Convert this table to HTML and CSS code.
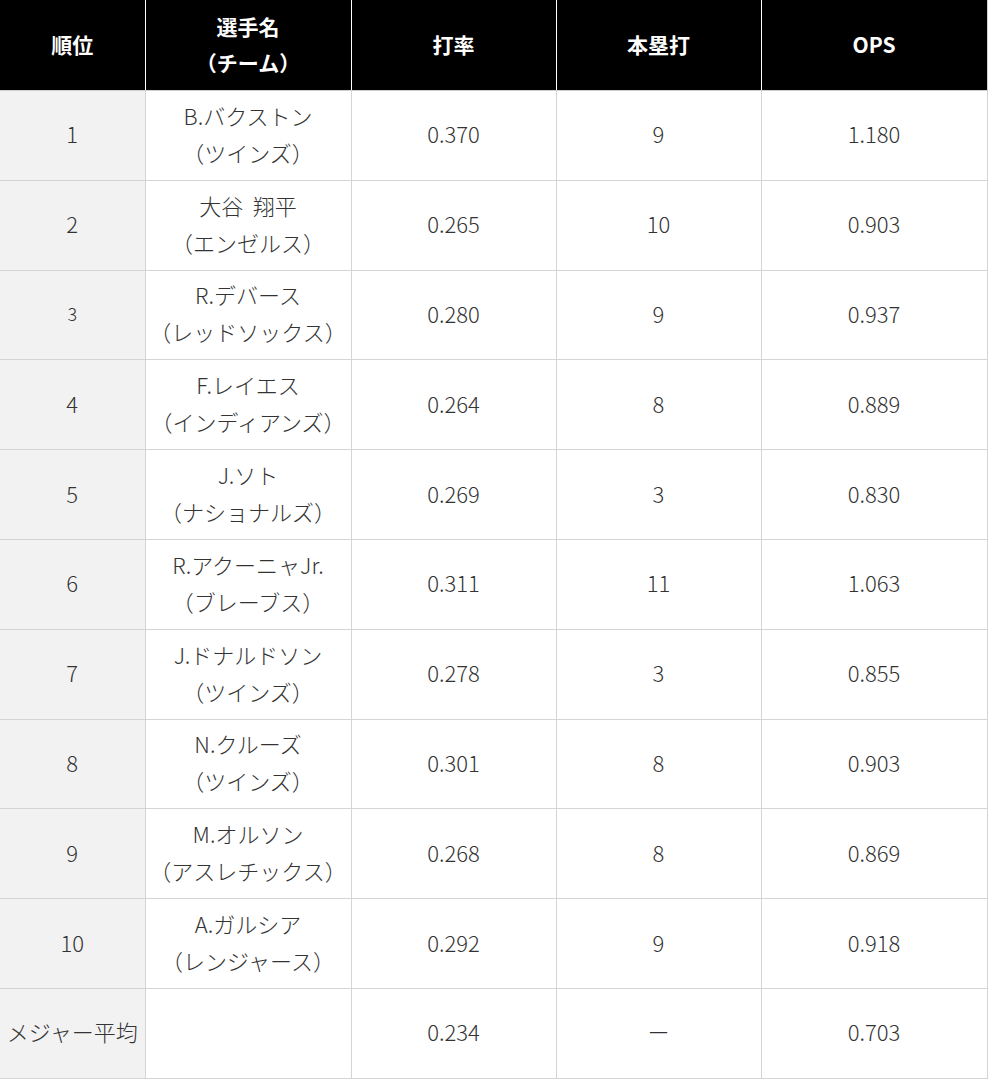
FILE: index.html
```html
<!DOCTYPE html>
<html lang="ja">
<head>
<meta charset="utf-8">
<title>ランキング</title>
<link rel="stylesheet" href="styles.css">
</head>
<body>
<table class="rank">
  <colgroup>
    <col class="c1"><col class="c2"><col class="c3"><col class="c4"><col class="c5">
  </colgroup>
  <thead>
    <tr>
      <th>順位</th>
      <th>選手名<br>（チーム）</th>
      <th>打率</th>
      <th>本塁打</th>
      <th>OPS</th>
    </tr>
  </thead>
  <tbody>
    <tr><td class="pos">1</td><td>B.バクストン<br>（ツインズ）</td><td>0.370</td><td>9</td><td>1.180</td></tr>
    <tr><td class="pos">2</td><td>大谷&nbsp;&nbsp;翔平<br>（エンゼルス）</td><td>0.265</td><td>10</td><td>0.903</td></tr>
    <tr><td class="pos small">3</td><td>R.デバース<br>（レッドソックス）</td><td>0.280</td><td>9</td><td>0.937</td></tr>
    <tr><td class="pos">4</td><td>F.レイエス<br>（インディアンズ）</td><td>0.264</td><td>8</td><td>0.889</td></tr>
    <tr><td class="pos">5</td><td>J.ソト<br>（ナショナルズ）</td><td>0.269</td><td>3</td><td>0.830</td></tr>
    <tr><td class="pos">6</td><td>R.アクーニャJr.<br>（ブレーブス）</td><td>0.311</td><td>11</td><td>1.063</td></tr>
    <tr><td class="pos">7</td><td>J.ドナルドソン<br>（ツインズ）</td><td>0.278</td><td>3</td><td>0.855</td></tr>
    <tr><td class="pos">8</td><td>N.クルーズ<br>（ツインズ）</td><td>0.301</td><td>8</td><td>0.903</td></tr>
    <tr><td class="pos">9</td><td>M.オルソン<br>（アスレチックス）</td><td>0.268</td><td>8</td><td>0.869</td></tr>
    <tr><td class="pos">10</td><td>A.ガルシア<br>（レンジャース）</td><td>0.292</td><td>9</td><td>0.918</td></tr>
    <tr><td class="pos avg">メジャー平均</td><td></td><td>0.234</td><td>ー</td><td>0.703</td></tr>
  </tbody>
</table>
</body>
</html>
```
FILE: styles.css
```css
html, body {
  margin: 0;
  padding: 0;
  background: #ffffff;
}

.rank {
  border-collapse: collapse;
  table-layout: fixed;
  width: 987px;
  font-family: "Noto Sans CJK JP", "Noto Sans", sans-serif;
  font-size: 22px;
  font-weight: 300;
  color: #333333;
}

.c1 { width: 145px; }
.c2 { width: 206px; }
.c3 { width: 205px; }
.c4 { width: 205px; }
.c5 { width: 226px; }

.rank th {
  background: #000000;
  color: #ffffff;
  font-weight: 700;
  font-size: 21px;
  height: 88px;
  line-height: 36px;
  padding: 0 0 2px;
  text-align: center;
  vertical-align: middle;
  border: 1px solid #ffffff;
  border-top: none;
  border-bottom: 1px solid #cfcfcf;
}

.rank th:first-child { border-left: none; }
.rank th:last-child { border-right: 1px solid #cfcfcf; }

.rank td {
  height: 85.8px;
  line-height: 37px;
  padding: 0 0 3px;
  text-align: center;
  vertical-align: middle;
  border: 1px solid #d4d4d4;
  background: #ffffff;
}

.rank td.pos {
  background: #f2f2f2;
  border-left: none;
}

.rank td.small { font-size: 18px; }

.rank td.avg {
  white-space: nowrap;
  letter-spacing: 0;
}
```
